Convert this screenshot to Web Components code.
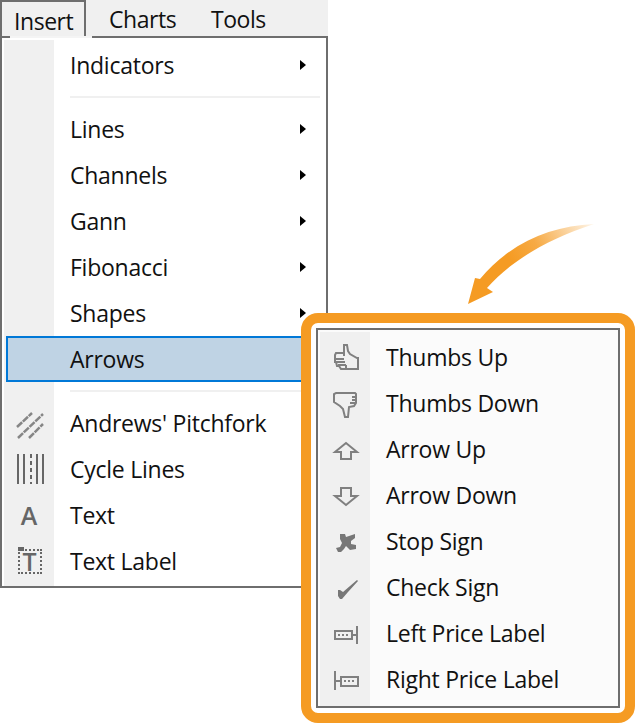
<!DOCTYPE html>
<html lang="en">
<head>
<meta charset="utf-8">
<title>Insert menu</title>
<style>
  html, body { margin: 0; background: #fff; }
  body { font: 23px/1 "Open Sans", "Liberation Sans", sans-serif; color: #111; letter-spacing: -.25px; }
</style>
</head>
<body>
<fx-stage>
  <fx-menubar>
    <fx-tab open>Insert</fx-tab>
    <fx-tab>Charts</fx-tab>
    <fx-tab>Tools</fx-tab>
  </fx-menubar>
  <fx-menu>
    <fx-item arrow>Indicators</fx-item>
    <fx-sep></fx-sep>
    <fx-item arrow>Lines</fx-item>
    <fx-item arrow>Channels</fx-item>
    <fx-item arrow>Gann</fx-item>
    <fx-item arrow>Fibonacci</fx-item>
    <fx-item arrow>Shapes</fx-item>
    <fx-item active>Arrows</fx-item>
    <fx-sep></fx-sep>
    <fx-item><fx-icon slot="icon" name="pitchfork"></fx-icon>Andrews' Pitchfork</fx-item>
    <fx-item><fx-icon slot="icon" name="cycle"></fx-icon>Cycle Lines</fx-item>
    <fx-item><fx-glyph slot="icon">A</fx-glyph>Text</fx-item>
    <fx-item><fx-glyph slot="icon" boxed>T</fx-glyph>Text Label</fx-item>
  </fx-menu>
  <fx-arrow></fx-arrow>
  <fx-callout>
    <fx-menu style="--menu-bg:#fbfbfb;--menu-pad:3px;--label-lift:2px">
      <fx-item><fx-icon slot="icon" name="thumbup"></fx-icon>Thumbs Up</fx-item>
      <fx-item><fx-icon slot="icon" name="thumbdown"></fx-icon>Thumbs Down</fx-item>
      <fx-item><fx-icon slot="icon" name="up"></fx-icon>Arrow Up</fx-item>
      <fx-item><fx-icon slot="icon" name="down"></fx-icon>Arrow Down</fx-item>
      <fx-item><fx-icon slot="icon" name="stop"></fx-icon>Stop Sign</fx-item>
      <fx-item><fx-icon slot="icon" name="check"></fx-icon>Check Sign</fx-item>
      <fx-item><fx-icon slot="icon" name="leftprice"></fx-icon>Left Price Label</fx-item>
      <fx-item><fx-icon slot="icon" name="rightprice"></fx-icon>Right Price Label</fx-item>
    </fx-menu>
  </fx-callout>
</fx-stage>

<script>
const define = (name, html) => {
  window.customElements.define(name, class extends HTMLElement {
    constructor () {
      super()
      this.attachShadow({ mode: 'open' }).innerHTML = html
    }
  })
}

define('fx-stage', /* html */`
<style>
  :host { display: block; position: relative; width: 640px; height: 728px; overflow: hidden; }
</style>
<slot></slot>`)

define('fx-menubar', /* html */`
<style>
  :host { display: flex; width: 328px; height: 36px; background: #f0f0f0; box-sizing: border-box; letter-spacing: -.45px; }
</style>
<slot></slot>`)

define('fx-tab', /* html */`
<style>
  :host { display: block; position: relative; box-sizing: border-box; height: 36px; padding: 7px 0 0 23px; width: 102px; line-height: 24px; }
  :host([open]) { width: 86px; padding: 7px 0 0 12px; border: 2px solid #6e6e6e; border-bottom: 0; }
  :host([open])::after { content: ""; position: absolute; left: 8px; width: 82px; bottom: -2px; height: 2px; background: #f4f4f4; z-index: 1; }
</style>
<slot></slot>`)

define('fx-menu', /* html */`
<style>
  :host { display: block; width: 328px; box-sizing: border-box; border: 2px solid #6e6e6e; background: var(--menu-bg, #fff); padding: 2px 2px 0; }
  .list { padding: var(--menu-pad, 2px) 0; background: linear-gradient(to right, #f0f0f0 50px, transparent 50px); }
</style>
<div class="list"><slot></slot></div>`)

define('fx-item', /* html */`
<style>
  :host { display: block; }
  .row { display: grid; grid-template-columns: 50px 1fr auto; align-items: center; box-sizing: border-box; height: 46px; padding-right: 18px; }
  .icon { display: flex; justify-content: center; align-items: center; }
  .label { padding: 0 0 var(--label-lift, 0) 16px; line-height: 24px; white-space: nowrap; }
  .more { display: none; width: 6px; height: 10px; background: #000; clip-path: polygon(0 0, 100% 50%, 0 100%); }
  :host([arrow]) .more { display: block; }
  :host([active]) .row { margin: 0 2px; border: 2px solid #0078d7; background: #bfd3e4; grid-template-columns: 46px 1fr auto; }
</style>
<div class="row">
  <span class="icon"><slot name="icon"></slot></span>
  <span class="label"><slot></slot></span>
  <span class="more"></span>
</div>`)

define('fx-sep', /* html */`
<style>
  :host { display: block; height: 18px; padding: 8px 4px 0 66px; box-sizing: border-box; }
  div { height: 2px; background: #f0f0f0; }
</style>
<div></div>`)

define('fx-glyph', /* html */`
<style>
  :host { display: flex; position: relative; width: 30px; height: 30px; align-items: center; justify-content: center; box-sizing: border-box; font: 600 25px/1 "Open Sans", sans-serif; color: #666; letter-spacing: 0; }
  :host([boxed]) { width: 24px; height: 25px; margin-left: 1px; border: 2px dotted #666; }
  :host([boxed])::before { content: ""; position: absolute; left: -2px; top: -4px; width: 6px; height: 4px; background: #666; }
</style>
<slot></slot>`)

define('fx-callout', /* html */`
<style>
  :host { display: block; position: absolute; left: 301px; top: 313px; width: 334px; height: 410px; box-sizing: border-box; border: 10px solid #f59b23; border-radius: 17px; background: #fff; padding: 5px; }
  ::slotted(fx-menu) { width: 304px; height: 380px; }
</style>
<slot></slot>`)

define('fx-arrow', /* html */`
<style>
  :host { display: block; position: absolute; left: 460px; top: 215px; width: 140px; height: 95px; }
  svg { display: block; }
</style>
<svg width="140" height="95" viewBox="460 215 140 95">
  <defs>
    <linearGradient id="fade" x1="594" y1="224" x2="490" y2="285" gradientUnits="userSpaceOnUse">
      <stop offset="0" stop-color="#f59b23" stop-opacity=".1"/>
      <stop offset=".5" stop-color="#f59b23" stop-opacity=".85"/>
      <stop offset=".75" stop-color="#f59b23"/>
    </linearGradient>
  </defs>
  <path fill="url(#fade)" d="M594 224C550 226 510 243 480 279L475 278L468 304L493 292L487 288C510 262 545 240 594 224Z"/>
</svg>`)

const iconPaths = {
  thumbup: '<path fill="none" stroke="#808080" stroke-width="2" d="M14 13V2h3l1 6 2 3 7 4h1v11H11l-2-3H7l-1-4H5v-7l1-2h8M5 16h9M6 19h9M8 22h8M16 22v4"/>',
  thumbdown: '<path fill="none" stroke="#808080" stroke-width="2" d="M6 4H25l1 1v9l-2 3-5 1-1 10h-3l-2-8-3-3-6-4V5zM22 8h4M22 11h4M20 14h5"/>',
  up: '<path fill="none" stroke="#808080" stroke-width="2" d="M16 8L5 17H11V24H21V17H27Z"/>',
  down: '<path fill="none" stroke="#808080" stroke-width="2" d="M11 7H21V15H27L16 24L5 15H11Z"/>',
  stop: '<path fill="#777" d="M10 7L15 7L16 10L19 9L25 7L25 11L21 14L21 17L26 18L26 22L20 23L16 19L14 22L11 25L8 25L6 21L10 20L12 16L10 12Z"/>',
  check: '<path fill="#777" d="M8 17h2l3 2L27 7l1 1-10 11-6 7h-2l-2-3z"/>',
  leftprice: '<path fill="none" stroke="#808080" stroke-width="2" d="M5 12h17v8H5zM22 16h5M27 7v18"/><path fill="none" stroke="#808080" stroke-width="2" stroke-dasharray="2 2" d="M8 16h12"/>',
  rightprice: '<path fill="none" stroke="#808080" stroke-width="2" d="M11 12h17v9H11zM5 16h6M5 6v19"/><path fill="none" stroke="#808080" stroke-width="2" stroke-dasharray="2 2" d="M14 16h12"/>',
  pitchfork: '<path fill="none" stroke="#868686" stroke-width="2.5" stroke-dasharray="7 1" d="M3 19L18 5M4 30L29 6M15 30L29 16"/>',
  cycle: '<path fill="none" stroke="#666" stroke-width="2" d="M4 0V30M10 0V30M23 0V30M29 0V30"/><path fill="none" stroke="#666" stroke-width="2" stroke-dasharray="4 3" d="M17 0V30"/>'
}

class FxIcon extends HTMLElement {
  constructor () {
    super()
    this.attachShadow({ mode: 'open' })
  }

  connectedCallback () {
    this.shadowRoot.innerHTML = /* html */`
    <style>
      :host { display: block; width: 30px; height: 30px; }
      svg { display: block; overflow: visible; }
    </style>
    <svg width="30" height="30" viewBox="0 0 30 30">${iconPaths[this.getAttribute('name')]}</svg>`
  }
}

window.customElements.define('fx-icon', FxIcon)
</script>
</body>
</html>
